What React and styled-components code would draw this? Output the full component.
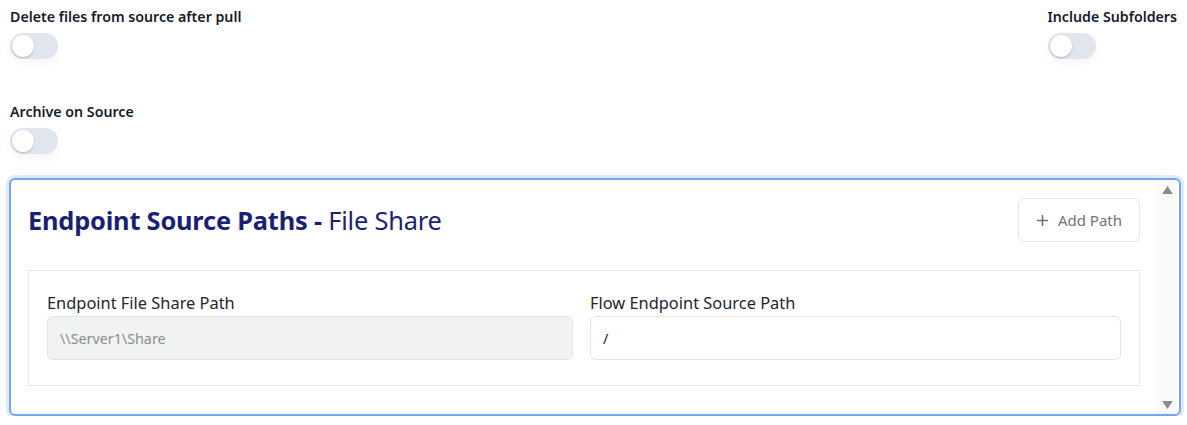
import React, { useState } from "react";
import styled, { createGlobalStyle } from "styled-components";

const GlobalStyle = createGlobalStyle`
  html, body {
    margin: 0;
    padding: 0;
    background: #ffffff;
    font-family: "Noto Sans", "Open Sans", sans-serif;
  }
  * { box-sizing: border-box; }
`;

const Toggle = ({ on, onChange }) => (
  <ToggleTrack $on={on} onClick={() => onChange(!on)}>
    <ToggleKnob $on={on} />
  </ToggleTrack>
);

const App = () => {
  const [deleteAfter, setDeleteAfter] = useState(false);
  const [subfolders, setSubfolders] = useState(false);
  const [archive, setArchive] = useState(false);

  return (
    <Page>
      <GlobalStyle />
      <OptionsGrid>
        <Option>
          <OptionLabel>Delete files from source after pull</OptionLabel>
          <Toggle on={deleteAfter} onChange={setDeleteAfter} />
        </Option>
        <Option $right>
          <OptionLabel>Include Subfolders</OptionLabel>
          <Toggle on={subfolders} onChange={setSubfolders} />
        </Option>
        <Option>
          <OptionLabel>Archive on Source</OptionLabel>
          <Toggle on={archive} onChange={setArchive} />
        </Option>
      </OptionsGrid>

      <PathsBox>
        <PathsContent>
          <PathsHeader>
            <PathsTitle>
              <strong>Endpoint Source Paths -</strong> File Share
            </PathsTitle>
            <AddButton type="button">
              <PlusIcon viewBox="0 0 14 14">
                <path d="M7 1v12M1 7h12" />
              </PlusIcon>
              Add Path
            </AddButton>
          </PathsHeader>
          <PathCard>
            <Field>
              <FieldLabel>Endpoint File Share Path</FieldLabel>
              <FieldInput $disabled readOnly value="\\Server1\Share" />
            </Field>
            <Field>
              <FieldLabel>Flow Endpoint Source Path</FieldLabel>
              <FieldInput defaultValue="/" />
            </Field>
          </PathCard>
        </PathsContent>
        <ScrollBar>
          <ScrollArrow viewBox="0 0 12 9">
            <path d="M6 0L12 9H0z" />
          </ScrollArrow>
          <ScrollArrow viewBox="0 0 12 9">
            <path d="M0 0H12L6 9z" />
          </ScrollArrow>
        </ScrollBar>
      </PathsBox>
    </Page>
  );
};

const Page = styled.div`
  width: 1187px;
  padding: 7px 10px 0 6px;
`;

const OptionsGrid = styled.div`
  display: grid;
  grid-template-columns: 1fr auto;
  row-gap: 43px;
  padding-left: 4px;
`;

const Option = styled.div`
  display: flex;
  flex-direction: column;
  align-items: flex-start;
  gap: 6px;
  justify-self: ${(p) => (p.$right ? "end" : "start")};
`;

const OptionLabel = styled.div`
  font-size: 14.2px;
  font-weight: 600;
  color: #151a2d;
  line-height: 20px;
`;

const ToggleTrack = styled.div`
  position: relative;
  width: 48px;
  height: 26px;
  border-radius: 13px;
  background: ${(p) => (p.$on ? "#3b82f6" : "#e1e5ee")};
  box-shadow: 0 4px 10px rgba(0, 0, 0, 0.04);
  cursor: pointer;
`;

const ToggleKnob = styled.div`
  position: absolute;
  top: 2px;
  left: ${(p) => (p.$on ? "24px" : "2px")};
  width: 22px;
  height: 22px;
  border-radius: 50%;
  background: #ffffff;
  box-shadow: 0 1px 2px rgba(60, 70, 100, 0.3);
`;

const PathsBox = styled.div`
  display: flex;
  margin-top: 24px;
  height: 238px;
  border: 2px solid #74a5ef;
  border-radius: 6px;
  box-shadow: 0 0 0 3px #dfeafb;
  margin-left: 3px;
  margin-right: -4px;
  overflow: hidden;
`;

const PathsContent = styled.div`
  flex: 1;
  padding: 18px 17px 0 17px;
`;

const PathsHeader = styled.div`
  display: flex;
  align-items: center;
  justify-content: space-between;
  height: 44px;
`;

const PathsTitle = styled.h2`
  margin: 0;
  font-size: 25.4px;
  font-weight: 400;
  color: #1c1f73;
  letter-spacing: -0.2px;

  strong {
    font-weight: 700;
  }
`;

const AddButton = styled.button`
  display: flex;
  align-items: center;
  gap: 9px;
  height: 44px;
  padding: 0 17px;
  background: #ffffff;
  border: 1px solid #e8e9ef;
  border-radius: 6px;
  color: #737373;
  font-family: inherit;
  font-size: 15px;
  cursor: pointer;
`;

const PlusIcon = styled.svg`
  width: 13px;
  height: 13px;
  stroke: #737373;
  stroke-width: 1.7;
  fill: none;
`;

const PathCard = styled.div`
  display: grid;
  grid-template-columns: 526fr 531fr;
  column-gap: 17px;
  margin-top: 28px;
  padding: 21px 18px 25px 18px;
  border: 1px solid #e4e6ee;
`;

const Field = styled.div`
  display: flex;
  flex-direction: column;
  gap: 2px;
`;

const FieldLabel = styled.label`
  font-size: 16.4px;
  color: #1f2430;
  line-height: 22px;
`;

const FieldInput = styled.input`
  height: 44px;
  padding: 0 12px;
  border: 1px solid #e3e5ec;
  border-radius: 6px;
  background: ${(p) => (p.$disabled ? "#f1f2f2" : "#ffffff")};
  color: ${(p) => (p.$disabled ? "#8a8d92" : "#222")};
  font-family: inherit;
  font-size: 14.3px;
  outline: none;
`;

const ScrollBar = styled.div`
  width: 20px;
  margin-right: 2px;
  display: flex;
  flex-direction: column;
  justify-content: space-between;
  align-items: center;
  background: #fafafa;
  padding: 6px 0 5px;
`;

const ScrollArrow = styled.svg`
  width: 11px;
  height: 8px;
  fill: #8a8a8a;
`;

export default App;
